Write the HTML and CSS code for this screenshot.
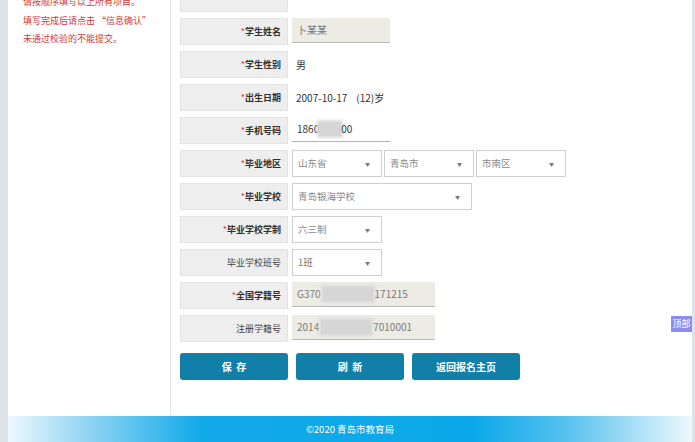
FILE: index.html
```html
<!DOCTYPE html>
<html lang="zh-CN">
<head>
<meta charset="utf-8">
<title>学生信息</title>
<link rel="stylesheet" href="styles.css">
</head>
<body>
<div class="page">
  <div class="main">
    <aside class="side">
      <p>请按顺序填写以上所有项目。</p>
      <p>填写完成后请点击 “信息确认”</p>
      <p>未通过校验的不能提交。</p>
    </aside>
    <section class="content">
      <div class="form">
        <div class="row"><div class="label"></div><div class="value"></div></div>
        <div class="row"><div class="label"><span class="req">*</span>学生姓名</div><div class="value"><div class="input ro w98">卜某某</div></div></div>
        <div class="row"><div class="label"><span class="req">*</span>学生性别</div><div class="value"><span class="text">男</span></div></div>
        <div class="row"><div class="label"><span class="req">*</span>出生日期</div><div class="value"><span class="text">2007-10-17&nbsp;&nbsp;&nbsp;&nbsp;(12)岁</span></div></div>
        <div class="row"><div class="label"><span class="req">*</span>手机号码</div><div class="value"><div class="input plain w98">1860<span class="blur b24"></span>00</div></div></div>
        <div class="row"><div class="label"><span class="req">*</span>毕业地区</div><div class="value sels">
          <div class="select w90">山东省<span class="arr">▼</span></div>
          <div class="select w90">青岛市<span class="arr">▼</span></div>
          <div class="select w90">市南区<span class="arr">▼</span></div>
        </div></div>
        <div class="row"><div class="label"><span class="req">*</span>毕业学校</div><div class="value"><div class="select w180">青岛银海学校<span class="arr">▼</span></div></div></div>
        <div class="row"><div class="label"><span class="req">*</span>毕业学校学制</div><div class="value"><div class="select w90">六三制<span class="arr">▼</span></div></div></div>
        <div class="row"><div class="label normal">毕业学校班号</div><div class="value"><div class="select w90 dark">1班<span class="arr">▼</span></div></div></div>
        <div class="row"><div class="label"><span class="req">*</span>全国学籍号</div><div class="value"><div class="input ro w143">G370<span class="blur b52"></span>171215</div></div></div>
        <div class="row"><div class="label normal">注册学籍号</div><div class="value"><div class="input ro w143">2014<span class="blur b52"></span>7010001</div></div></div>
      </div>
      <div class="actions">
        <button class="btn">保&nbsp;&nbsp;存</button>
        <button class="btn">刷&nbsp;&nbsp;新</button>
        <button class="btn">返回报名主页</button>
      </div>
    </section>
  </div>
  <footer class="footer">©2020 青岛市教育局</footer>
  <a class="top-btn">顶部</a>
</div>
</body>
</html>
```
FILE: styles.css
```css
* { box-sizing: border-box; }
html, body { margin: 0; padding: 0; background: #fff; }
body {
  font-family: "Noto Sans CJK SC", "Liberation Sans", sans-serif;
  font-size: 10px;
  color: #333;
}
.page {
  position: relative;
  width: 695px;
  height: 442px;
  overflow: hidden;
  border-left: 8px solid #dde3e8;
  border-right: 3px solid #dde3e8;
  display: flex;
  flex-direction: column;
}
.main {
  height: 416px;
  display: flex;
  overflow: hidden;
}
.side {
  width: 163px;
  flex: none;
  border-right: 1px solid #e4e4e4;
  padding-left: 15px;
  margin-top: -7px;
}
.side p {
  margin: 0;
  color: #d2363a;
  font-size: 9px;
  line-height: 18.5px;
  white-space: nowrap;
}
.content {
  padding-left: 9px;
  flex: 1;
}
.form {
  margin-top: -15px;
  display: flex;
  flex-direction: column;
  gap: 6px;
}
.row {
  display: grid;
  grid-template-columns: 108px 1fr;
  column-gap: 4px;
  height: 27px;
}
.label {
  background: #eeeeee;
  border: 1px solid #e3e3e3;
  text-align: right;
  padding-right: 6px;
  font-weight: bold;
  font-size: 9px;
  line-height: 25px;
  color: #2e2e2e;
}
.label.normal { font-weight: normal; color: #444; }
.req { color: #e0353b; font-weight: normal; }
.value {
  display: flex;
  align-items: center;
}
.text { padding-left: 4px; color: #333; font-size: 10px; }
.input {
  height: 25px;
  align-self: flex-start;
  line-height: 24px;
  padding-left: 5px;
  display: flex;
  align-items: center;
  color: #555;
  font-size: 10px;
}
.input.ro {
  background: #ecebe4;
  border-bottom: 1px solid #b9b9b5;
  color: #7a7a7a;
}
.input.plain {
  background: #fff;
  border-bottom: 1px solid #b5b5b5;
  color: #333;
}
.w98 { width: 98px; }
.w143 { width: 143px; }
.w90 { width: 90px; }
.w180 { width: 180px; }
.blur {
  display: inline-block;
  height: 14px;
  background: #d6d6d6;
  box-shadow: 0 0 3px 2px #dcdcdc;
}
.b24 { width: 22px; }
.b52 { width: 50px; margin: 0 2px 0 2px; }
.sels { gap: 2px; }
.select {
  position: relative;
  height: 27px;
  border: 1px solid #cfcfcf;
  background: #fff;
  color: #8a8a8a;
  padding-left: 5px;
  line-height: 25px;
  font-size: 9.5px;
  flex: none;
}
.select.dark { color: #777; }
.arr {
  position: absolute;
  right: 11px;
  top: 0;
  font-size: 5px;
  color: #777;
}
.actions {
  display: flex;
  gap: 8px;
  margin-top: 11px;
}
.btn {
  width: 108px;
  height: 27px;
  border: none;
  border-radius: 3px;
  background: #117fa8;
  color: #fff;
  font-family: "Noto Sans CJK SC", "Liberation Sans", sans-serif;
  font-size: 10px;
  font-weight: bold;
  padding: 0;
}
.footer {
  height: 26px;
  line-height: 26px;
  text-align: center;
  color: #fff;
  font-size: 9.5px;
  background: linear-gradient(to right, #eef8fd 0%, #8fd3f3 12%, #13aae8 28%, #0aa8e8 68%, #59c2ef 82%, #eef8fd 100%);
}
.top-btn {
  position: absolute;
  right: 0;
  top: 316px;
  width: 21px;
  height: 16px;
  background: #8c8cf0;
  color: #fff;
  font-size: 9px;
  line-height: 16px;
  text-align: center;
}
```
